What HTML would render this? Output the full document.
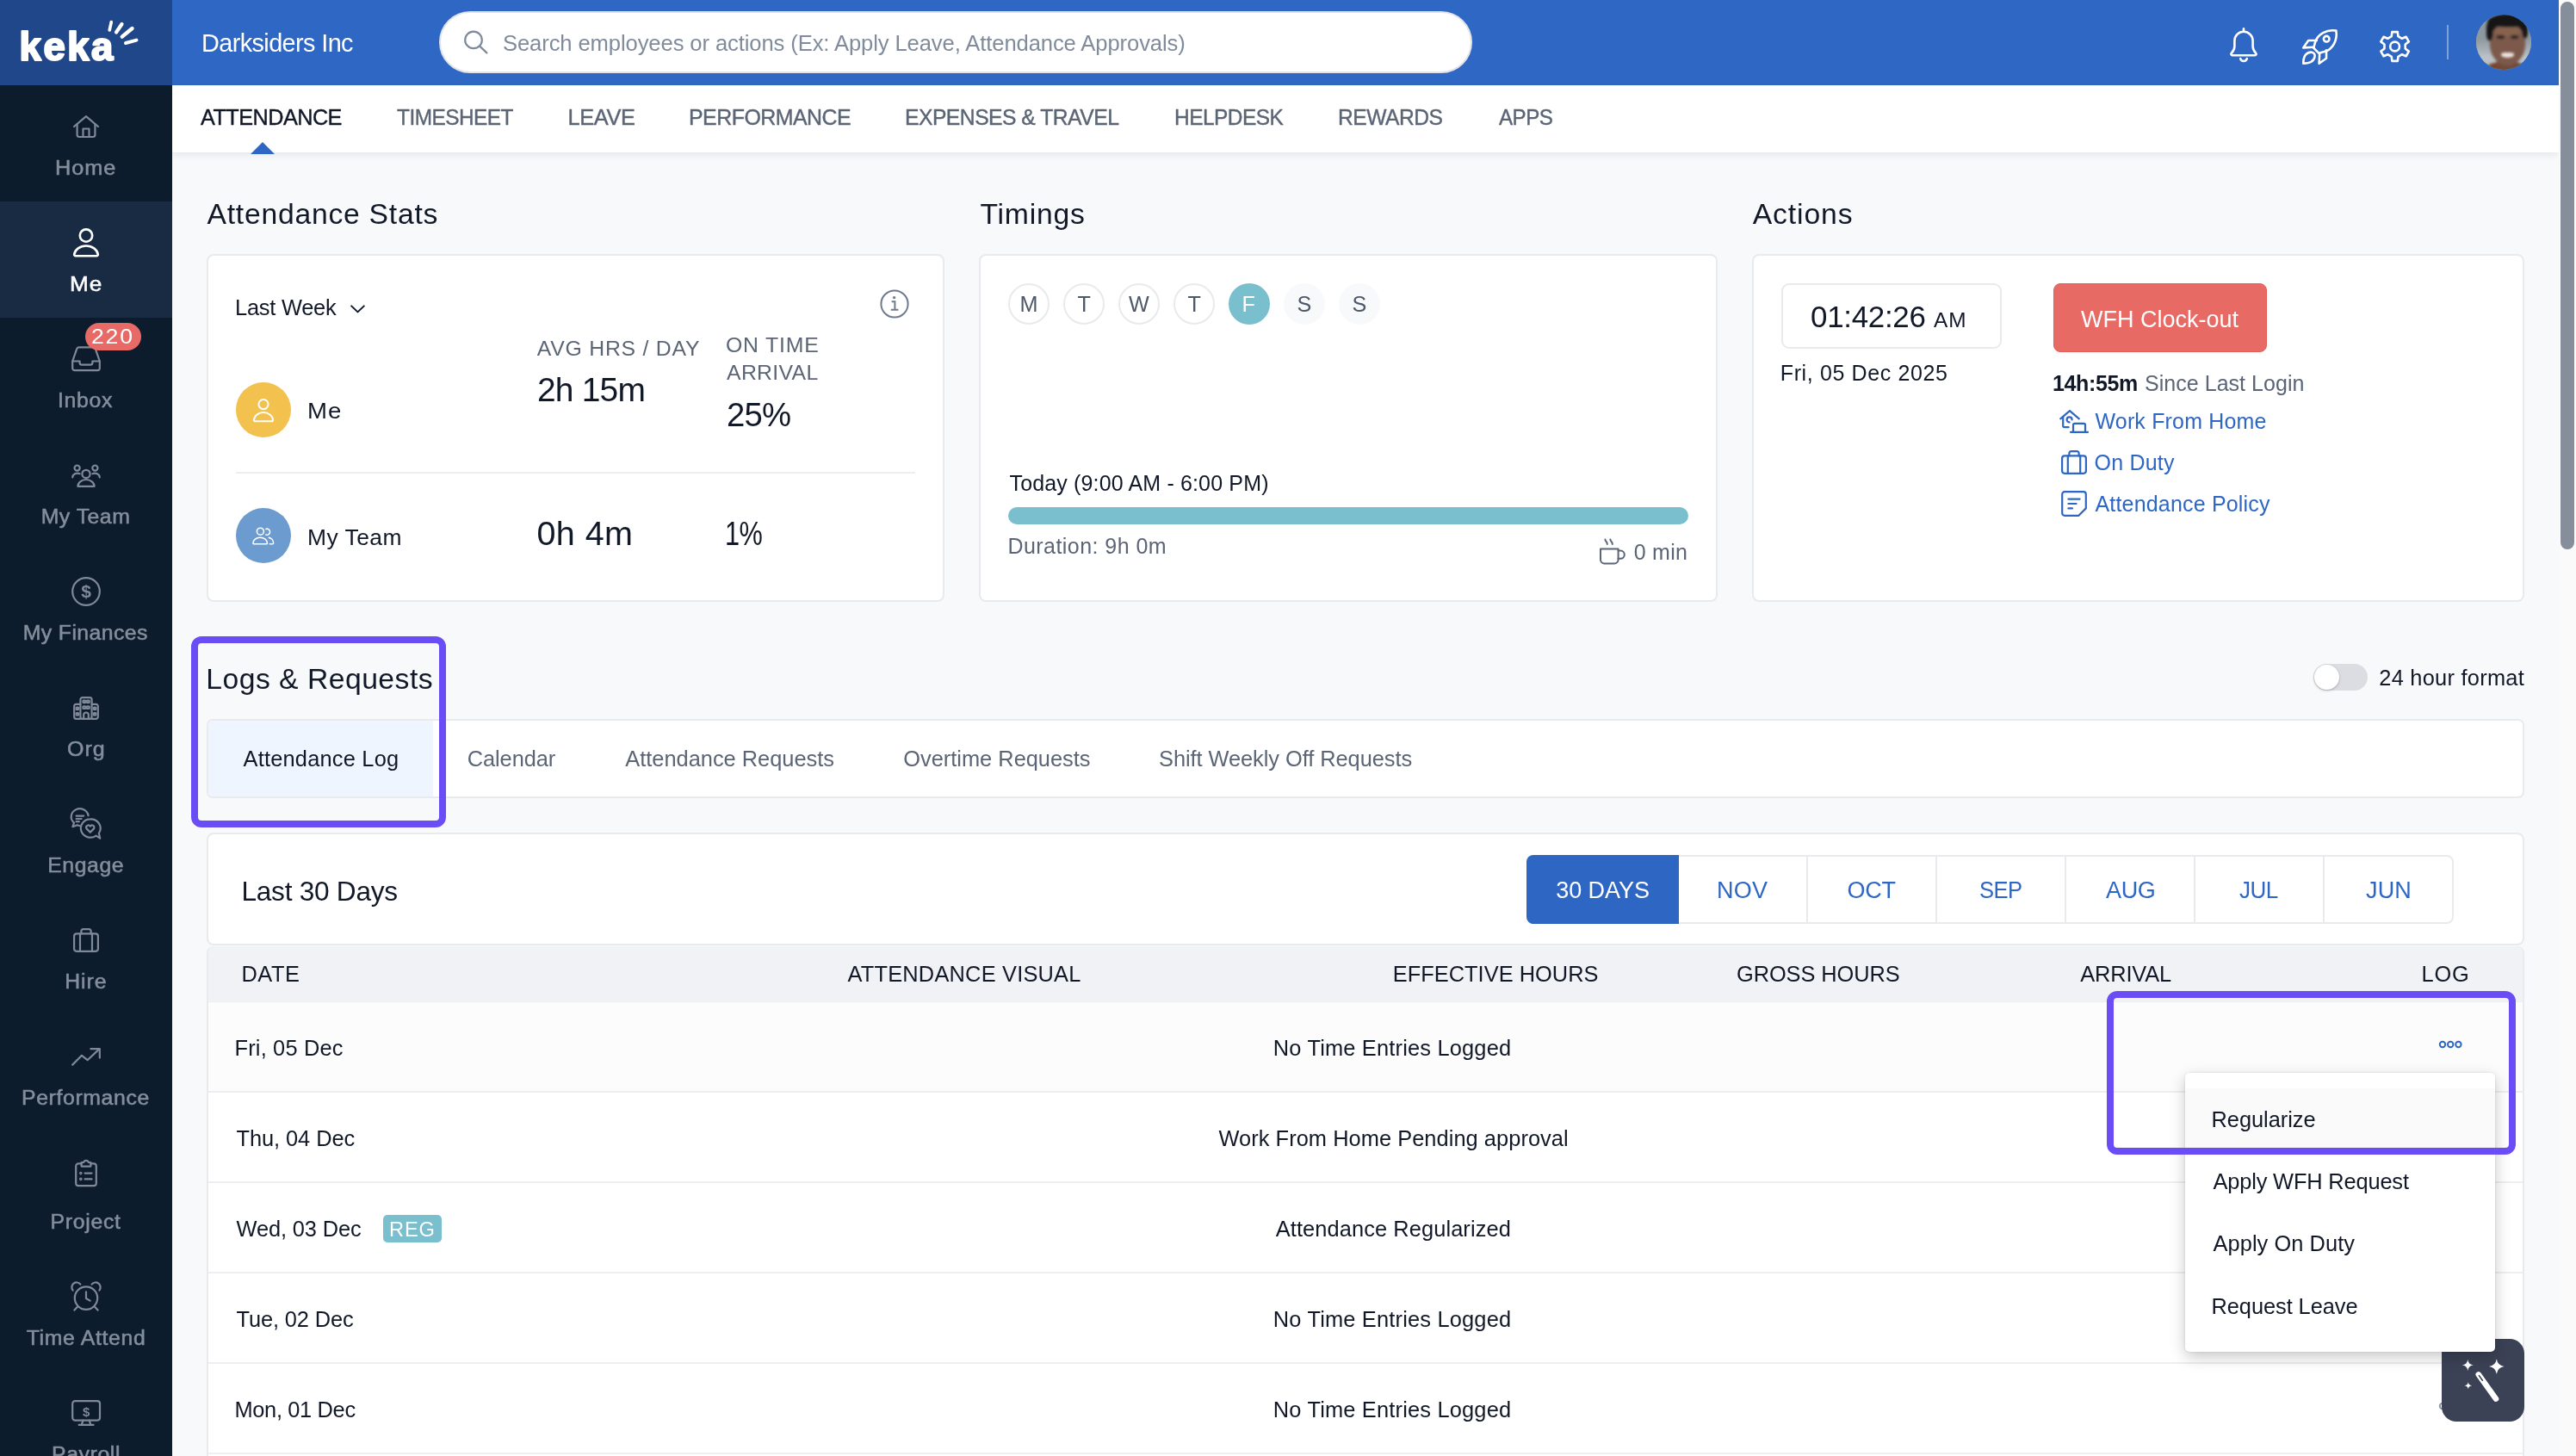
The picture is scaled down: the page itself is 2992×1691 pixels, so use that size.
<!DOCTYPE html>
<html lang="en"><head><meta charset="utf-8"><title>Keka - Attendance</title>
<style>
*{box-sizing:border-box;margin:0;padding:0}
html,body{width:2992px;height:1691px;overflow:hidden;background:#f8f9fb;font-family:"Liberation Sans",sans-serif;}
.a{position:absolute}
.t{position:absolute;white-space:pre;line-height:1}
.card{position:absolute;background:#fff;border:2px solid #e8eaed;border-radius:8px}
svg{position:absolute;overflow:visible}
.sbi{fill:none;stroke:#7f8998;stroke-width:2.2;stroke-linecap:round;stroke-linejoin:round}
.w{fill:none;stroke:#fff;stroke-width:2.6;stroke-linecap:round;stroke-linejoin:round}
.bl{fill:none;stroke:#2e66c4;stroke-width:2.2;stroke-linecap:round;stroke-linejoin:round}
.row{position:absolute;left:242px;width:2688px;height:105px;border-bottom:2px solid #eceef1;background:#fff}
</style></head><body>
<div class="a" style="left:0;top:0;width:2992px;height:1691px;overflow:hidden;will-change:transform">
<div class="a" style="left:200px;top:0;width:2772px;height:99px;background:#2f67c4"></div>
<div class="a" style="left:200px;top:99px;width:2772px;height:78px;background:#fff;box-shadow:0 3px 8px rgba(30,40,60,.09)"></div>
<div class="a" style="left:2972px;top:0;width:20px;height:1691px;background:#fafafa"></div>
<div class="a" style="left:2974px;top:2px;width:16px;height:636px;border-radius:8px;background:#868e9c"></div>
<div class="a" style="left:0;top:0;width:200px;height:1691px;background:#0d1c2c"></div>
<div class="a" style="left:0;top:0;width:200px;height:99px;background:#204789"></div>
<div class="a" style="left:0;top:234px;width:200px;height:135px;background:#192b42"></div>
<svg style="left:0;top:0" width="200" height="99"><text x="22.600" y="70.200" font-family="Liberation Sans, sans-serif" font-size="45.500" font-weight="700" fill="#fff" stroke="#fff" stroke-width="2.200" stroke-linejoin="round" letter-spacing="2.500">keka</text></svg>
<svg style="left:0;top:0" width="200" height="99"><g fill="none" stroke="#fff" stroke-linecap="round">
<path d="M129.3,25.5 L127.2,35" stroke-width="3.6"/><path d="M141.5,28 L135,37.5" stroke-width="4.2"/>
<path d="M153.5,33 L141.8,42.6" stroke-width="4.4"/><path d="M158.5,46.6 L146,50" stroke-width="4"/></g></svg>
<div class="t" style="left:64.26px;top:181px;font-size:24.8px;line-height:27px;color:#848e9c;letter-spacing:0.930px;transform:scaleX(1.0220);transform-origin:0 0;-webkit-text-stroke:0.55px currentColor;">Home</div>
<div class="t" style="left:80.69px;top:316px;font-size:24.8px;line-height:27px;color:#fff;letter-spacing:0.930px;transform:scaleX(1.0557);transform-origin:0 0;-webkit-text-stroke:0.55px currentColor;">Me</div>
<div class="t" style="left:67.00px;top:451px;font-size:24.8px;line-height:27px;color:#848e9c;letter-spacing:0.685px;-webkit-text-stroke:0.55px currentColor;">Inbox</div>
<div class="t" style="left:47.70px;top:586px;font-size:24.8px;line-height:27px;color:#848e9c;letter-spacing:0.496px;-webkit-text-stroke:0.55px currentColor;">My Team</div>
<div class="t" style="left:26.70px;top:721px;font-size:24.8px;line-height:27px;color:#848e9c;letter-spacing:0.414px;-webkit-text-stroke:0.55px currentColor;">My Finances</div>
<div class="t" style="left:77.99px;top:856px;font-size:24.8px;line-height:27px;color:#848e9c;letter-spacing:0.930px;transform:scaleX(1.0095);transform-origin:0 0;-webkit-text-stroke:0.55px currentColor;">Org</div>
<div class="t" style="left:55.20px;top:991px;font-size:24.8px;line-height:27px;color:#848e9c;letter-spacing:0.579px;-webkit-text-stroke:0.55px currentColor;">Engage</div>
<div class="t" style="left:75.30px;top:1126px;font-size:24.8px;line-height:27px;color:#848e9c;letter-spacing:0.909px;-webkit-text-stroke:0.55px currentColor;">Hire</div>
<div class="t" style="left:25.00px;top:1261px;font-size:24.8px;line-height:27px;color:#848e9c;letter-spacing:0.624px;-webkit-text-stroke:0.55px currentColor;">Performance</div>
<div class="t" style="left:58.50px;top:1405px;font-size:24.8px;line-height:27px;color:#848e9c;letter-spacing:0.702px;-webkit-text-stroke:0.55px currentColor;">Project</div>
<div class="t" style="left:30.70px;top:1540px;font-size:24.8px;line-height:27px;color:#848e9c;letter-spacing:0.663px;-webkit-text-stroke:0.55px currentColor;">Time Attend</div>
<div class="t" style="left:60.00px;top:1675px;font-size:24.8px;line-height:27px;color:#848e9c;letter-spacing:0.619px;-webkit-text-stroke:0.55px currentColor;">Payroll</div>
<svg style="left:85px;top:134px" width="30" height="27" viewBox="0 0 30 27"><g class="sbi"><path d="M1,13 L15,1.2 L29,13"/><path d="M4.6,10.2 V22.5 a2.5,2.5 0 0 0 2.5,2.5 H22.9 a2.5,2.5 0 0 0 2.5,-2.5 V10.2"/><path d="M11.5,25 V15.5 H18.5 V25"/></g></svg>
<svg style="left:85px;top:265px" width="30" height="34" viewBox="0 0 30 34"><g class="w"><circle cx="15" cy="8.6" r="7.2"/><path d="M2.8,32.2 h24.4 a1.6,1.6 0 0 0 1.6,-1.7 a13.9,11.4 0 0 0 -27.6,0 a1.6,1.6 0 0 0 1.6,1.7 z"/></g></svg>
<svg style="left:83px;top:402px" width="34" height="30" viewBox="0 0 34 30"><g class="sbi"><path d="M1.2,17.5 L6.2,3.2 a2.6,2.6 0 0 1 2.4,-1.8 H25.4 a2.6,2.6 0 0 1 2.4,1.8 L32.8,17.5 V25.6 a2.6,2.6 0 0 1 -2.6,2.6 H3.8 a2.6,2.6 0 0 1 -2.6,-2.6 Z"/><path d="M1.2,17.5 H9.6 v1.8 a2.4,2.4 0 0 0 2.4,2.4 h10 a2.4,2.4 0 0 0 2.4,-2.4 v-1.8 H32.8"/></g></svg>
<svg style="left:83px;top:539px" width="34" height="27" viewBox="0 0 34 27"><g class="sbi"><circle cx="17" cy="11.4" r="4.6"/><path d="M7.4,25.8 a9.6,7.8 0 0 1 19.2,0 z"/><circle cx="6.6" cy="4.6" r="3.1"/><circle cx="27.4" cy="4.6" r="3.1"/><path d="M1.2,15.4 a5.8,5 0 0 1 8.4,-4.2"/><path d="M32.8,15.4 a5.8,5 0 0 0 -8.4,-4.2"/></g></svg>
<svg style="left:83px;top:670px" width="34" height="34" viewBox="0 0 34 34"><g class="sbi"><circle cx="17" cy="17" r="15.8"/><text x="17" y="24.4" text-anchor="middle" font-family="Liberation Sans, sans-serif" font-size="21" font-weight="700" fill="#7f8998" stroke="none">$</text></g></svg>
<svg style="left:85px;top:808.6px" width="30" height="27" viewBox="0 0 30 27"><g class="sbi"><rect x="8.4" y="1.1" width="13.2" height="24.8" rx="2.4"/><path d="M8.4,8.8 H3.6 a2.4,2.4 0 0 0 -2.4,2.4 V23.5 a2.4,2.4 0 0 0 2.4,2.4 H8.4"/><path d="M21.6,8.8 H26.4 a2.4,2.4 0 0 1 2.4,2.4 V23.5 a2.4,2.4 0 0 1 -2.4,2.4 H21.6"/><path d="M12.2,25.9 v-4.6 a2.8,2.8 0 0 1 5.6,0 v4.6"/><rect x="11.4" y="4.6" width="3" height="2.6" rx=".6"/><rect x="15.8" y="4.6" width="3" height="2.6" rx=".6"/><rect x="11.4" y="11.4" width="3" height="2.6" rx=".6"/><rect x="15.8" y="11.4" width="3" height="2.6" rx=".6"/><rect x="3.6" y="12.6" width="2.6" height="2.6" rx=".6"/><rect x="3.6" y="19" width="2.6" height="2.6" rx=".6"/><rect x="23.8" y="12.6" width="2.6" height="2.6" rx=".6"/><rect x="23.8" y="19" width="2.6" height="2.6" rx=".6"/></g></svg>
<svg style="left:82.3px;top:939.7px" width="35" height="35" viewBox="0 0 35 35"><g class="sbi"><path d="M20.6,7.2 a10,9.4 0 1 0 -16.6,8.4 l-1.6,4.6 l5.4,-2 a10,9.4 0 0 0 2.4,.8"/><path d="M6.6,7.6 h8.6 M6.6,11 h6 M6.6,14.2 h3.2"/><path d="M22.8,11.4 a11.2,10.6 0 1 0 6.8,19.2 l4.6,3 l-1.4,-5.8 a11.2,10.6 0 0 0 -10,-16.4 z"/><path d="M22.8,26.6 l-4.2,-4.2 a2.5,2.5 0 0 1 4.2,-2.8 a2.5,2.5 0 0 1 4.2,2.8 z"/></g></svg>
<svg style="left:85px;top:1078px" width="30" height="28" viewBox="0 0 30 28"><g class="sbi"><rect x="1.1" y="6.4" width="27.8" height="20.4" rx="3"/><path d="M9.4,6.4 V3.4 a2.2,2.2 0 0 1 2.2,-2.2 h6.8 a2.2,2.2 0 0 1 2.2,2.2 V6.4"/><path d="M8,6.4 V26.8 M22,6.4 V26.8"/></g></svg>
<svg style="left:83px;top:1217px" width="34" height="21" viewBox="0 0 34 21"><g class="sbi"><path d="M1.2,19.6 L12,8.8 L18.6,14.2 L32,1.6"/><path d="M22.4,1.2 H32.8 V11.6"/></g></svg>
<svg style="left:87.3px;top:1345.3px" width="26" height="34" viewBox="0 0 26 34"><g class="sbi"><path d="M7.6,6.4 H4.2 a3,3 0 0 0 -3,3 V29.2 a3,3 0 0 0 3,3 H21.8 a3,3 0 0 0 3,-3 V9.4 a3,3 0 0 0 -3,-3 H18.4"/><path d="M7.6,5 h2.6 a2.9,2.9 0 0 1 5.6,0 h2.6 v4.6 H7.6 z"/><path d="M11.6,17.6 H19.6 M11.6,24.4 H19.6"/><circle cx="6.8" cy="17.6" r=".7"/><circle cx="6.8" cy="24.4" r=".7"/></g></svg>
<svg style="left:83px;top:1489px" width="34" height="34" viewBox="0 0 34 34"><g class="sbi"><circle cx="17" cy="18.6" r="13.2"/><path d="M17,11.4 V19 L21.6,21.6"/><path d="M1.6,9.6 a5.6,5.6 0 0 1 8.8,-7"/><path d="M32.4,9.6 a5.6,5.6 0 0 0 -8.8,-7"/><path d="M7.2,28.4 L3.4,32.6 M26.8,28.4 L30.6,32.6"/></g></svg>
<svg style="left:83px;top:1626px" width="34" height="30" viewBox="0 0 34 30"><g class="sbi"><rect x="1.2" y="1.2" width="31.8" height="22.4" rx="3"/><path d="M13.6,23.6 l-1.8,5 M20.6,23.6 l1.8,5 M8.6,28.8 H25.6"/><text x="17.1" y="18.8" text-anchor="middle" font-family="Liberation Sans, sans-serif" font-size="15" font-weight="700" fill="#7f8998" stroke="none">$</text></g></svg>
<div class="a" style="left:99px;top:375px;width:65px;height:32px;border-radius:16px;background:#e86a67"></div>
<div class="t" style="left:106.28px;top:377px;font-size:23.9px;line-height:27px;color:#fff;letter-spacing:1.600px;transform:scaleX(1.1155);transform-origin:0 0;">220</div>
<div class="t" style="left:234.02px;top:34px;font-size:29.1px;line-height:32px;color:#fff;letter-spacing:-0.606px;transform:scaleX(0.9915);transform-origin:0 0;">Darksiders Inc</div>
<div class="a" style="left:510px;top:13px;width:1200px;height:72px;border-radius:36px;background:#fff;border:2px solid #e1e3e9"></div>
<svg style="left:536px;top:33px" width="34" height="32"><g fill="none" stroke="#7e8a9a" stroke-width="2.2" stroke-linecap="round"><circle cx="14" cy="13.4" r="9.8"/><path d="M21.2,20.6 L29.4,28.4"/></g></svg>
<div class="t" style="left:584.00px;top:36px;font-size:25.6px;line-height:28px;color:#808b9b;letter-spacing:-0.103px;">Search employees or actions (Ex: Apply Leave, Attendance Approvals)</div>
<svg style="left:2590px;top:32px" width="32" height="41" viewBox="0 0 32 41"><g class="w"><path d="M16,1.4 V4.6"/><path d="M16,4.8 a10.6,10.6 0 0 1 10.6,10.6 v6.4 c0,3.6 1.6,6 3.6,8 a1.4,1.4 0 0 1 -1,2.4 H2.8 a1.4,1.4 0 0 1 -1,-2.4 c2,-2 3.6,-4.4 3.6,-8 v-6.4 a10.6,10.6 0 0 1 10.6,-10.6 z"/><path d="M12.2,36 a3.9,3.9 0 0 0 7.6,0"/></g></svg>
<svg style="left:2674px;top:34px" width="41" height="41" viewBox="0 0 41 41"><g class="w"><path d="M39.4,1.6 C28.400,-0.200 18,5.600 15.200,14.600 L13.200,21.600 L19.400,27.800 L26.400,25.800 C35.400,23 41.200,12.600 39.400,1.600 Z"/><circle cx="28.200" cy="11.200" r="3.300"/><path d="M16.800,13 H7.200 L1.200,21.400 L13.600,20.800"/><path d="M28,24.400 V33.800 L19.600,39.800 L20.200,27.800"/><path d="M1.300,39.700 C1.200,31 5,26.500 10.400,26.600 C13.600,26.800 15,29.200 14.600,31.400 C14,36 10,39.600 1.300,39.700 Z"/></g></svg>
<svg style="left:2764px;top:36px" width="36" height="37" viewBox="0 0 36 37"><g class="w"><path d="M13.77,6.21 L14.38,1.10 L20.82,1.10 L21.43,6.21 L25.90,8.79 L30.62,6.76 L33.84,12.34 L29.73,15.42 L29.73,20.58 L33.84,23.66 L30.62,29.24 L25.90,27.21 L21.43,29.79 L20.82,34.90 L14.38,34.90 L13.77,29.79 L9.30,27.21 L4.58,29.24 L1.36,23.66 L5.47,20.58 L5.47,15.42 L1.36,12.34 L4.58,6.76 L9.30,8.79 Z" stroke-linejoin="round"/><circle cx="17.6" cy="18" r="5.4"/></g></svg>
<div class="a" style="left:2842px;top:29px;width:2px;height:40px;background:#7fa1dd"></div>
<div class="a" style="left:2876px;top:17px;width:64px;height:64px;border-radius:50%;overflow:hidden;background:#939da3">
<div class="a" style="left:-4px;top:-4px;width:72px;height:72px;filter:blur(1.5px);background:linear-gradient(180deg,#8c979e 0%,#8e999f 45%,#a3adb3 60%,#bcc4c9 75%,#aab2b7 100%)">
<div class="a" style="left:12px;top:58px;width:54px;height:26px;border-radius:50%;background:#7b4427"></div>
<div class="a" style="left:16px;top:4px;width:48px;height:35px;border-radius:50% 50% 42% 42%;background:#151515"></div>
<div class="a" style="left:28px;top:50px;width:24px;height:18px;border-radius:40%;background:#6f4c3c"></div>
<div class="a" style="left:20px;top:14px;width:41px;height:49px;border-radius:44% 44% 50% 50%;background:#7c594b"></div>
<div class="a" style="left:25px;top:17px;width:31px;height:12px;border-radius:50%;background:#86624f"></div>
<div class="a" style="left:17px;top:3px;width:46px;height:15px;border-radius:50% 50% 42% 58% / 70% 70% 30% 30%;background:#151515"></div>
<div class="a" style="left:16px;top:12px;width:7px;height:22px;border-radius:40%;background:#151515"></div>
<div class="a" style="left:58px;top:12px;width:6px;height:19px;border-radius:40%;background:#151515"></div>
<div class="a" style="left:28px;top:28px;width:9px;height:4px;border-radius:50%;background:#35261f"></div>
<div class="a" style="left:44px;top:28px;width:9px;height:4px;border-radius:50%;background:#35261f"></div>
<div class="a" style="left:33px;top:47.500px;width:15px;height:6px;border-radius:30% 30% 50% 50%;background:#efe5df"></div>
</div></div>
<div class="t" style="left:232.50px;top:122px;font-size:25.4px;line-height:28px;color:#111827;letter-spacing:-0.529px;transform:scaleX(0.9938);transform-origin:0 0;-webkit-text-stroke:0.4px currentColor;">ATTENDANCE</div>
<div class="t" style="left:461.00px;top:122px;font-size:25.4px;line-height:28px;color:#5b6575;letter-spacing:-0.529px;transform:scaleX(0.9605);transform-origin:0 0;-webkit-text-stroke:0.4px currentColor;">TIMESHEET</div>
<div class="t" style="left:659.50px;top:122px;font-size:25.4px;line-height:28px;color:#5b6575;letter-spacing:-0.385px;-webkit-text-stroke:0.4px currentColor;">LEAVE</div>
<div class="t" style="left:800.04px;top:122px;font-size:25.4px;line-height:28px;color:#5b6575;letter-spacing:-0.529px;transform:scaleX(0.9814);transform-origin:0 0;-webkit-text-stroke:0.4px currentColor;">PERFORMANCE</div>
<div class="t" style="left:1050.80px;top:122px;font-size:25.4px;line-height:28px;color:#5b6575;letter-spacing:-0.529px;transform:scaleX(0.9726);transform-origin:0 0;-webkit-text-stroke:0.4px currentColor;">EXPENSES &amp; TRAVEL</div>
<div class="t" style="left:1364.07px;top:122px;font-size:25.4px;line-height:28px;color:#5b6575;letter-spacing:-0.529px;transform:scaleX(0.9628);transform-origin:0 0;-webkit-text-stroke:0.4px currentColor;">HELPDESK</div>
<div class="t" style="left:1554.06px;top:122px;font-size:25.4px;line-height:28px;color:#5b6575;letter-spacing:-0.529px;transform:scaleX(0.9696);transform-origin:0 0;-webkit-text-stroke:0.4px currentColor;">REWARDS</div>
<div class="t" style="left:1740.50px;top:122px;font-size:25.4px;line-height:28px;color:#5b6575;letter-spacing:-0.529px;transform:scaleX(0.9506);transform-origin:0 0;-webkit-text-stroke:0.4px currentColor;">APPS</div>
<svg style="left:291px;top:165px" width="28" height="14"><path d="M0,14 L14,0 L28,14 Z" fill="#2e66c4"/></svg>
<div class="t" style="left:240.50px;top:230px;font-size:33.7px;line-height:37px;color:#111827;letter-spacing:0.752px;">Attendance Stats</div>
<div class="t" style="left:1138.50px;top:230px;font-size:33.7px;line-height:37px;color:#111827;letter-spacing:0.779px;">Timings</div>
<div class="t" style="left:2035.75px;top:230px;font-size:33.7px;line-height:37px;color:#111827;letter-spacing:0.895px;">Actions</div>
<div class="card" style="left:240px;top:295px;width:857px;height:404px"></div>
<div class="card" style="left:1137px;top:295px;width:858px;height:404px"></div>
<div class="card" style="left:2035px;top:295px;width:897px;height:404px"></div>
<div class="t" style="left:273.00px;top:343px;font-size:25.4px;line-height:28px;color:#111827;letter-spacing:-0.224px;">Last Week</div>
<svg style="left:407px;top:354px" width="17" height="10"><path d="M1.2,1.4 L8.5,8.4 L15.8,1.4" fill="none" stroke="#111827" stroke-width="2" stroke-linecap="round" stroke-linejoin="round"/></svg>
<svg style="left:1022px;top:336px" width="34" height="34"><circle cx="17" cy="17" r="15.6" fill="none" stroke="#6f7a8c" stroke-width="2"/><circle cx="16.6" cy="9.6" r="1.7" fill="#6f7a8c"/><path d="M13.6,14.2 H17.4 V23.6 M12.8,23.8 H21.4" fill="none" stroke="#6f7a8c" stroke-width="2"/></svg>
<div class="t" style="left:623.75px;top:391px;font-size:24.8px;line-height:27px;color:#5b6575;letter-spacing:0.767px;">AVG HRS / DAY</div>
<div class="t" style="left:843.00px;top:387px;font-size:24.8px;line-height:27px;color:#5b6575;letter-spacing:0.829px;">ON TIME</div>
<div class="t" style="left:844.00px;top:419px;font-size:24.8px;line-height:27px;color:#5b6575;letter-spacing:0.336px;">ARRIVAL</div>
<div class="t" style="left:623.51px;top:430px;font-size:39.5px;line-height:44px;color:#111827;letter-spacing:-0.823px;transform:scaleX(0.9861);transform-origin:0 0;">2h 15m</div>
<div class="t" style="left:844.03px;top:459px;font-size:39.5px;line-height:44px;color:#111827;letter-spacing:-0.823px;transform:scaleX(0.9696);transform-origin:0 0;">25%</div>
<div class="a" style="left:274px;top:444px;width:64px;height:64px;border-radius:50%;background:#f2c14e"></div>
<svg style="left:294px;top:462.6px" width="24" height="28"><g fill="none" stroke="#fff" stroke-width="2" stroke-linejoin="round"><circle cx="12" cy="6.600" r="5.600"/><path d="M2,26.200 h20 a1,1 0 0 0 1,-1.100 a11,9 0 0 0 -22,0 a1,1 0 0 0 1,1.100 z"/></g></svg>
<div class="t" style="left:356.91px;top:462px;font-size:26.4px;line-height:30px;color:#111827;letter-spacing:0.990px;transform:scaleX(1.0436);transform-origin:0 0;">Me</div>
<div class="a" style="left:274px;top:548px;width:789px;height:2px;background:#eceef1"></div>
<div class="a" style="left:274px;top:590px;width:64px;height:64px;border-radius:50%;background:#6c9bd0"></div>
<svg style="left:293px;top:611px" width="26" height="22"><g fill="none" stroke="#fff" stroke-width="1.600" stroke-linejoin="round" stroke-linecap="round"><circle cx="9.400" cy="6.200" r="4"/><path d="M1.900,20.800 h14.600 a.9,.9 0 0 0 .9,-1 a8.200,6.600 0 0 0 -16.400,0 a.9,.9 0 0 0 .9,1 z"/><path d="M15.900,3.400 a3.500,3.500 0 1 1 0,6.600"/><path d="M19.400,13.400 a6.400,6.400 0 0 1 5.200,6.400 a.9,.9 0 0 1 -.9,.9 h-3.400"/></g></svg>
<div class="t" style="left:357.00px;top:609px;font-size:26.4px;line-height:30px;color:#111827;letter-spacing:0.490px;">My Team</div>
<div class="t" style="left:623.50px;top:597px;font-size:39.5px;line-height:44px;color:#111827;letter-spacing:0.405px;">0h 4m</div>
<div class="t" style="left:842.17px;top:597px;font-size:39.5px;line-height:44px;color:#111827;letter-spacing:-0.823px;transform:scaleX(0.7767);transform-origin:0 0;">1%</div>
<div class="a" style="left:1171px;top:329px;width:48px;height:48px;border-radius:50%;background:#fff;border:2px solid #e8eaed"></div>
<div class="t" style="left:1184.50px;top:339px;font-size:25.2px;line-height:28px;color:#4d5869;">M</div>
<div class="a" style="left:1235px;top:329px;width:48px;height:48px;border-radius:50%;background:#fff;border:2px solid #e8eaed"></div>
<div class="t" style="left:1251.50px;top:339px;font-size:25.2px;line-height:28px;color:#4d5869;">T</div>
<div class="a" style="left:1299px;top:329px;width:48px;height:48px;border-radius:50%;background:#fff;border:2px solid #e8eaed"></div>
<div class="t" style="left:1311.00px;top:339px;font-size:25.2px;line-height:28px;color:#4d5869;">W</div>
<div class="a" style="left:1363px;top:329px;width:48px;height:48px;border-radius:50%;background:#fff;border:2px solid #e8eaed"></div>
<div class="t" style="left:1379.50px;top:339px;font-size:25.2px;line-height:28px;color:#4d5869;">T</div>
<div class="a" style="left:1427px;top:329px;width:48px;height:48px;border-radius:50%;background:#79bfcd"></div>
<div class="t" style="left:1442.50px;top:339px;font-size:25.2px;line-height:28px;color:#fff;">F</div>
<div class="a" style="left:1491px;top:329px;width:48px;height:48px;border-radius:50%;background:#f8f9fb"></div>
<div class="t" style="left:1506.50px;top:339px;font-size:25.2px;line-height:28px;color:#4d5869;">S</div>
<div class="a" style="left:1555px;top:329px;width:48px;height:48px;border-radius:50%;background:#f8f9fb"></div>
<div class="t" style="left:1570.50px;top:339px;font-size:25.2px;line-height:28px;color:#4d5869;">S</div>
<div class="t" style="left:1172.50px;top:547px;font-size:25.0px;line-height:28px;color:#111827;letter-spacing:0.150px;">Today (9:00 AM - 6:00 PM)</div>
<div class="a" style="left:1171px;top:589px;width:790px;height:20px;border-radius:10px;background:#79bfcd"></div>
<div class="t" style="left:1170.50px;top:620px;font-size:25.0px;line-height:28px;color:#5b6575;letter-spacing:0.443px;">Duration: 9h 0m</div>
<svg style="left:1857px;top:625px" width="32" height="31"><g fill="none" stroke="#5b6575" stroke-width="2" stroke-linecap="round" stroke-linejoin="round"><path d="M2,12.6 H22.6 V25 a4.4,4.4 0 0 1 -4.4,4.4 H6.4 a4.4,4.400 0 0 1 -4.4,-4.400 Z"/><path d="M22.600,14.600 h2.600 a4.600,4.600 0 0 1 0,9.200 h-2.600"/><path d="M7.400,1.400 c0,2.400 2.400,2.800 2.400,5.600 M13.400,1.400 c0,2.400 2.400,2.800 2.400,5.600"/></g></svg>
<div class="t" style="left:1897.75px;top:627px;font-size:25.0px;line-height:28px;color:#5b6575;letter-spacing:0.255px;">0 min</div>
<div class="a" style="left:2069px;top:329px;width:256px;height:76px;border:2px solid #e8eaed;border-radius:9px;background:#fff"></div>
<div class="t" style="left:2103.00px;top:348px;font-size:34.9px;line-height:39px;color:#111827;letter-spacing:-0.273px;">01:42:26</div>
<div class="t" style="left:2246.00px;top:359px;font-size:23.3px;line-height:26px;color:#111827;letter-spacing:0.874px;transform:scaleX(1.0461);transform-origin:0 0;">AM</div>
<div class="t" style="left:2067.75px;top:419px;font-size:25.0px;line-height:28px;color:#111827;letter-spacing:0.623px;">Fri, 05 Dec 2025</div>
<div class="a" style="left:2385px;top:329px;width:248px;height:80px;border-radius:8px;background:#e76a64;border:1px solid #e55f59"></div>
<div class="t" style="left:2417.00px;top:356px;font-size:27.0px;line-height:30px;color:#fff;">WFH Clock-out</div>
<div class="t" style="left:2384.00px;top:431px;font-size:25.0px;line-height:28px;color:#111827;font-weight:700;letter-spacing:-0.369px;">14h:55m</div>
<div class="t" style="left:2491.00px;top:431px;font-size:25.0px;line-height:28px;color:#5b6575;letter-spacing:0.037px;">Since Last Login</div>
<div class="t" style="left:2433.50px;top:475px;font-size:25.0px;line-height:28px;color:#2e66c4;letter-spacing:0.164px;">Work From Home</div>
<div class="t" style="left:2432.50px;top:523px;font-size:25.0px;line-height:28px;color:#2e66c4;letter-spacing:0.217px;">On Duty</div>
<div class="t" style="left:2433.50px;top:571px;font-size:25.0px;line-height:28px;color:#2e66c4;letter-spacing:0.180px;">Attendance Policy</div>
<svg style="left:2392px;top:476px" width="34" height="27" viewBox="0 0 34 27"><g class="bl"><path d="M1.2,10.4 L12,1.2 L22.8,10.4"/><path d="M4.2,8.200 V18.600 a1.600,1.600 0 0 0 1.600,1.600 H10.600"/><path d="M14.600,11.400 a3,3 0 1 0 -3,3"/><path d="M16,25.600 V17.400 a1.600,1.600 0 0 1 1.600,-1.600 H28.400 a1.600,1.600 0 0 1 1.600,1.600 V25.600"/><path d="M13,25.800 H33"/></g></svg>
<svg style="left:2393.5px;top:523px" width="30" height="28" viewBox="0 0 30 28"><g class="bl"><rect x="1.100" y="6.400" width="27.800" height="20.400" rx="3"/><path d="M9.400,6.400 V3.400 a2.200,2.200 0 0 1 2.200,-2.200 h6.800 a2.200,2.200 0 0 1 2.200,2.200 V6.400"/><path d="M7.800,6.400 V26.800 M22.200,6.400 V26.800"/></g></svg>
<svg style="left:2393.5px;top:570px" width="30" height="30" viewBox="0 0 30 30"><g class="bl"><path d="M4,1.200 H26 a2.800,2.800 0 0 1 2.800,2.800 V20.400 L20.400,28.800 H4 a2.800,2.800 0 0 1 -2.800,-2.800 V4 a2.800,2.800 0 0 1 2.800,-2.800 z"/><path d="M8.400,9.600 H21.600 M8.400,15 H17.600 M8.400,20.400 H13"/></g></svg>
<div class="t" style="left:239.25px;top:770px;font-size:33.7px;line-height:37px;color:#111827;letter-spacing:0.485px;">Logs &amp; Requests</div>
<div class="a" style="left:2687px;top:771px;width:63px;height:31px;border-radius:16px;background:#dcdde3"></div>
<div class="a" style="left:2688px;top:772px;width:29px;height:29px;border-radius:50%;background:#fff;box-shadow:0 1px 3px rgba(0,0,0,.25)"></div>
<div class="t" style="left:2763.25px;top:773px;font-size:25.4px;line-height:28px;color:#111827;letter-spacing:0.264px;">24 hour format</div>
<div class="card" style="left:240px;top:835px;width:2692px;height:92px;border-radius:7px"></div>
<div class="a" style="left:242px;top:837px;width:261px;height:88px;background:#eff5fe;border-radius:5px 0 0 5px"></div>
<div class="t" style="left:282.50px;top:867px;font-size:25.4px;line-height:28px;color:#111827;letter-spacing:0.211px;">Attendance Log</div>
<div class="t" style="left:542.75px;top:867px;font-size:25.4px;line-height:28px;color:#5b6575;letter-spacing:-0.083px;">Calendar</div>
<div class="t" style="left:726.25px;top:867px;font-size:25.4px;line-height:28px;color:#5b6575;">Attendance Requests</div>
<div class="t" style="left:1049.25px;top:867px;font-size:25.4px;line-height:28px;color:#5b6575;">Overtime Requests</div>
<div class="t" style="left:1346.00px;top:867px;font-size:25.4px;line-height:28px;color:#5b6575;letter-spacing:-0.055px;">Shift Weekly Off Requests</div>
<div class="card" style="left:240px;top:967px;width:2692px;height:131px;border-radius:8px 8px 8px 8px"></div>
<div class="t" style="left:280.50px;top:1017px;font-size:31.6px;line-height:36px;color:#111827;letter-spacing:-0.259px;">Last 30 Days</div>
<div class="a" style="left:1773px;top:993px;width:1077px;height:80px;border:2px solid #e8eaed;border-radius:8px;background:#fff"></div>
<div class="a" style="left:1773px;top:993px;width:177px;height:80px;border-radius:8px 0 0 8px;background:#2e66c4"></div>
<div class="a" style="left:2098px;top:995px;width:2px;height:76px;background:#e8eaed"></div>
<div class="a" style="left:2248px;top:995px;width:2px;height:76px;background:#e8eaed"></div>
<div class="a" style="left:2398px;top:995px;width:2px;height:76px;background:#e8eaed"></div>
<div class="a" style="left:2548px;top:995px;width:2px;height:76px;background:#e8eaed"></div>
<div class="a" style="left:2698px;top:995px;width:2px;height:76px;background:#e8eaed"></div>
<div class="t" style="left:1807.20px;top:1019px;font-size:27.0px;line-height:30px;color:#fff;letter-spacing:-0.041px;">30 DAYS</div>
<div class="t" style="left:1993.90px;top:1019px;font-size:27.0px;line-height:30px;color:#2e66c4;letter-spacing:0.300px;">NOV</div>
<div class="t" style="left:2145.50px;top:1019px;font-size:27.0px;line-height:30px;color:#2e66c4;letter-spacing:-0.200px;">OCT</div>
<div class="t" style="left:2298.85px;top:1019px;font-size:27.0px;line-height:30px;color:#2e66c4;letter-spacing:-0.562px;transform:scaleX(0.9471);transform-origin:0 0;">SEP</div>
<div class="t" style="left:2446.00px;top:1019px;font-size:27.0px;line-height:30px;color:#2e66c4;letter-spacing:-0.379px;">AUG</div>
<div class="t" style="left:2601.00px;top:1019px;font-size:27.0px;line-height:30px;color:#2e66c4;letter-spacing:-0.562px;transform:scaleX(0.9654);transform-origin:0 0;">JUL</div>
<div class="t" style="left:2748.00px;top:1019px;font-size:27.0px;line-height:30px;color:#2e66c4;letter-spacing:0.126px;">JUN</div>
<div class="a" style="left:240px;top:1099px;width:2692px;height:600px;border:2px solid #e8eaed;border-radius:8px 8px 0 0;background:#fff"></div>
<div class="a" style="left:242px;top:1099px;width:2688px;height:65px;background:#f1f2f5;border-radius:7px 7px 0 0;border-bottom:1px solid #eceef1"></div>
<div class="t" style="left:280.50px;top:1117px;font-size:25.4px;line-height:28px;color:#111827;letter-spacing:0.535px;">DATE</div>
<div class="t" style="left:984.50px;top:1117px;font-size:25.4px;line-height:28px;color:#111827;letter-spacing:0.205px;">ATTENDANCE VISUAL</div>
<div class="t" style="left:1617.75px;top:1117px;font-size:25.4px;line-height:28px;color:#111827;letter-spacing:0.020px;">EFFECTIVE HOURS</div>
<div class="t" style="left:2017.00px;top:1117px;font-size:25.4px;line-height:28px;color:#111827;letter-spacing:-0.077px;">GROSS HOURS</div>
<div class="t" style="left:2416.25px;top:1117px;font-size:25.4px;line-height:28px;color:#111827;letter-spacing:-0.150px;">ARRIVAL</div>
<div class="t" style="left:2812.50px;top:1117px;font-size:25.4px;line-height:28px;color:#111827;letter-spacing:0.815px;">LOG</div>
<div class="row" style="top:1164px;background:#fcfcfd"></div>
<div class="t" style="left:272.50px;top:1203px;font-size:25.4px;line-height:28px;color:#111827;letter-spacing:0.178px;">Fri, 05 Dec</div>
<div class="t" style="left:1478.80px;top:1203px;font-size:25.4px;line-height:28px;color:#111827;letter-spacing:0.184px;">No Time Entries Logged</div>
<svg style="left:2830px;top:1206px" width="32" height="14"><g fill="none" stroke="#2e66c4" stroke-width="2"><circle cx="7" cy="7" r="3.2"/><circle cx="16.2" cy="7" r="3.2"/><circle cx="25.4" cy="7" r="3.2"/></g></svg>
<div class="row" style="top:1269px;background:#fff"></div>
<div class="t" style="left:274.50px;top:1308px;font-size:25.4px;line-height:28px;color:#111827;letter-spacing:-0.061px;">Thu, 04 Dec</div>
<div class="t" style="left:1415.50px;top:1308px;font-size:25.4px;line-height:28px;color:#111827;letter-spacing:0.053px;">Work From Home Pending approval</div>
<svg style="left:2830px;top:1311px" width="32" height="14"><g fill="none" stroke="#8d95a6" stroke-width="2"><circle cx="7" cy="7" r="3.2"/><circle cx="16.2" cy="7" r="3.2"/><circle cx="25.4" cy="7" r="3.2"/></g></svg>
<div class="row" style="top:1374px;background:#fff"></div>
<div class="t" style="left:274.50px;top:1413px;font-size:25.4px;line-height:28px;color:#111827;letter-spacing:-0.111px;">Wed, 03 Dec</div>
<div class="t" style="left:1481.70px;top:1413px;font-size:25.4px;line-height:28px;color:#111827;letter-spacing:0.100px;">Attendance Regularized</div>
<svg style="left:2830px;top:1416px" width="32" height="14"><g fill="none" stroke="#8d95a6" stroke-width="2"><circle cx="7" cy="7" r="3.2"/><circle cx="16.2" cy="7" r="3.2"/><circle cx="25.4" cy="7" r="3.2"/></g></svg>
<div class="row" style="top:1479px;background:#fff"></div>
<div class="t" style="left:274.50px;top:1518px;font-size:25.4px;line-height:28px;color:#111827;letter-spacing:-0.117px;">Tue, 02 Dec</div>
<div class="t" style="left:1478.80px;top:1518px;font-size:25.4px;line-height:28px;color:#111827;letter-spacing:0.184px;">No Time Entries Logged</div>
<svg style="left:2830px;top:1521px" width="32" height="14"><g fill="none" stroke="#8d95a6" stroke-width="2"><circle cx="7" cy="7" r="3.2"/><circle cx="16.2" cy="7" r="3.2"/><circle cx="25.4" cy="7" r="3.2"/></g></svg>
<div class="row" style="top:1584px;background:#fff"></div>
<div class="t" style="left:272.50px;top:1623px;font-size:25.4px;line-height:28px;color:#111827;letter-spacing:-0.336px;">Mon, 01 Dec</div>
<div class="t" style="left:1478.80px;top:1623px;font-size:25.4px;line-height:28px;color:#111827;letter-spacing:0.184px;">No Time Entries Logged</div>
<svg style="left:2830px;top:1626px" width="32" height="14"><g fill="none" stroke="#8d95a6" stroke-width="2"><circle cx="7" cy="7" r="3.2"/><circle cx="16.2" cy="7" r="3.2"/><circle cx="25.4" cy="7" r="3.2"/></g></svg>
<div class="a" style="left:445px;top:1411px;width:68px;height:32px;border-radius:5px;background:#79bfcd"></div>
<div class="t" style="left:452.29px;top:1415px;font-size:23.5px;line-height:26px;color:#fff;letter-spacing:0.881px;transform:scaleX(1.0058);transform-origin:0 0;">REG</div>
<div class="a" style="left:2836px;top:1555px;width:96px;height:96px;border-radius:17px;background:#3b4255"></div>
<svg style="left:0;top:0" width="2992" height="1691"><path d="M2899.8,1578.2 Q2900.944,1585.856 2908.6000000000004,1587 Q2900.944,1588.144 2899.8,1595.8 Q2898.6560000000004,1588.144 2891.0,1587 Q2898.6560000000004,1585.856 2899.8,1578.2 Z" fill="#fff"/><path d="M2866.3,1578.8000000000002 Q2866.828,1584.872 2872.9,1585.4 Q2866.828,1585.928 2866.3,1592.0 Q2865.7720000000004,1585.928 2859.7000000000003,1585.4 Q2865.7720000000004,1584.872 2866.3,1578.8000000000002 Z" fill="#fff"/><path d="M2866.8,1605.1 Q2867.136,1608.964 2871.0,1609.3 Q2867.136,1609.636 2866.8,1613.5 Q2866.4640000000004,1609.636 2862.6000000000004,1609.3 Q2866.4640000000004,1608.964 2866.8,1605.1 Z" fill="#fff"/><path d="M2878.8,1596.4 L2899,1624.6" stroke="#fff" stroke-width="6.6" stroke-linecap="round"/><path d="M2879.4,1597.6 L2883.4,1603.2" stroke="#3b4255" stroke-width="1.6" stroke-linecap="round"/></svg>
<div class="a" style="left:2538px;top:1246px;width:360px;height:324px;border-radius:5px;background:#fff;box-shadow:0 6px 18px rgba(0,0,0,.22),0 0 3px rgba(0,0,0,.12)"></div>
<div class="a" style="left:2538px;top:1264px;width:360px;height:73px;background:#fafafb"></div>
<div class="t" style="left:2568.50px;top:1286px;font-size:25.4px;line-height:28px;color:#111827;letter-spacing:-0.028px;">Regularize</div>
<div class="t" style="left:2570.50px;top:1358px;font-size:25.4px;line-height:28px;color:#111827;letter-spacing:-0.159px;">Apply WFH Request</div>
<div class="t" style="left:2570.50px;top:1430px;font-size:25.4px;line-height:28px;color:#111827;letter-spacing:0.066px;">Apply On Duty</div>
<div class="t" style="left:2568.50px;top:1503px;font-size:25.4px;line-height:28px;color:#111827;letter-spacing:-0.065px;">Request Leave</div>
<div class="a" style="left:222px;top:739px;width:296px;height:222px;border:8px solid #6b4df5;border-radius:12px"></div>
<div class="a" style="left:2447px;top:1151px;width:475px;height:190px;border:8px solid #6b4df5;border-radius:12px"></div>
</div></body></html>
